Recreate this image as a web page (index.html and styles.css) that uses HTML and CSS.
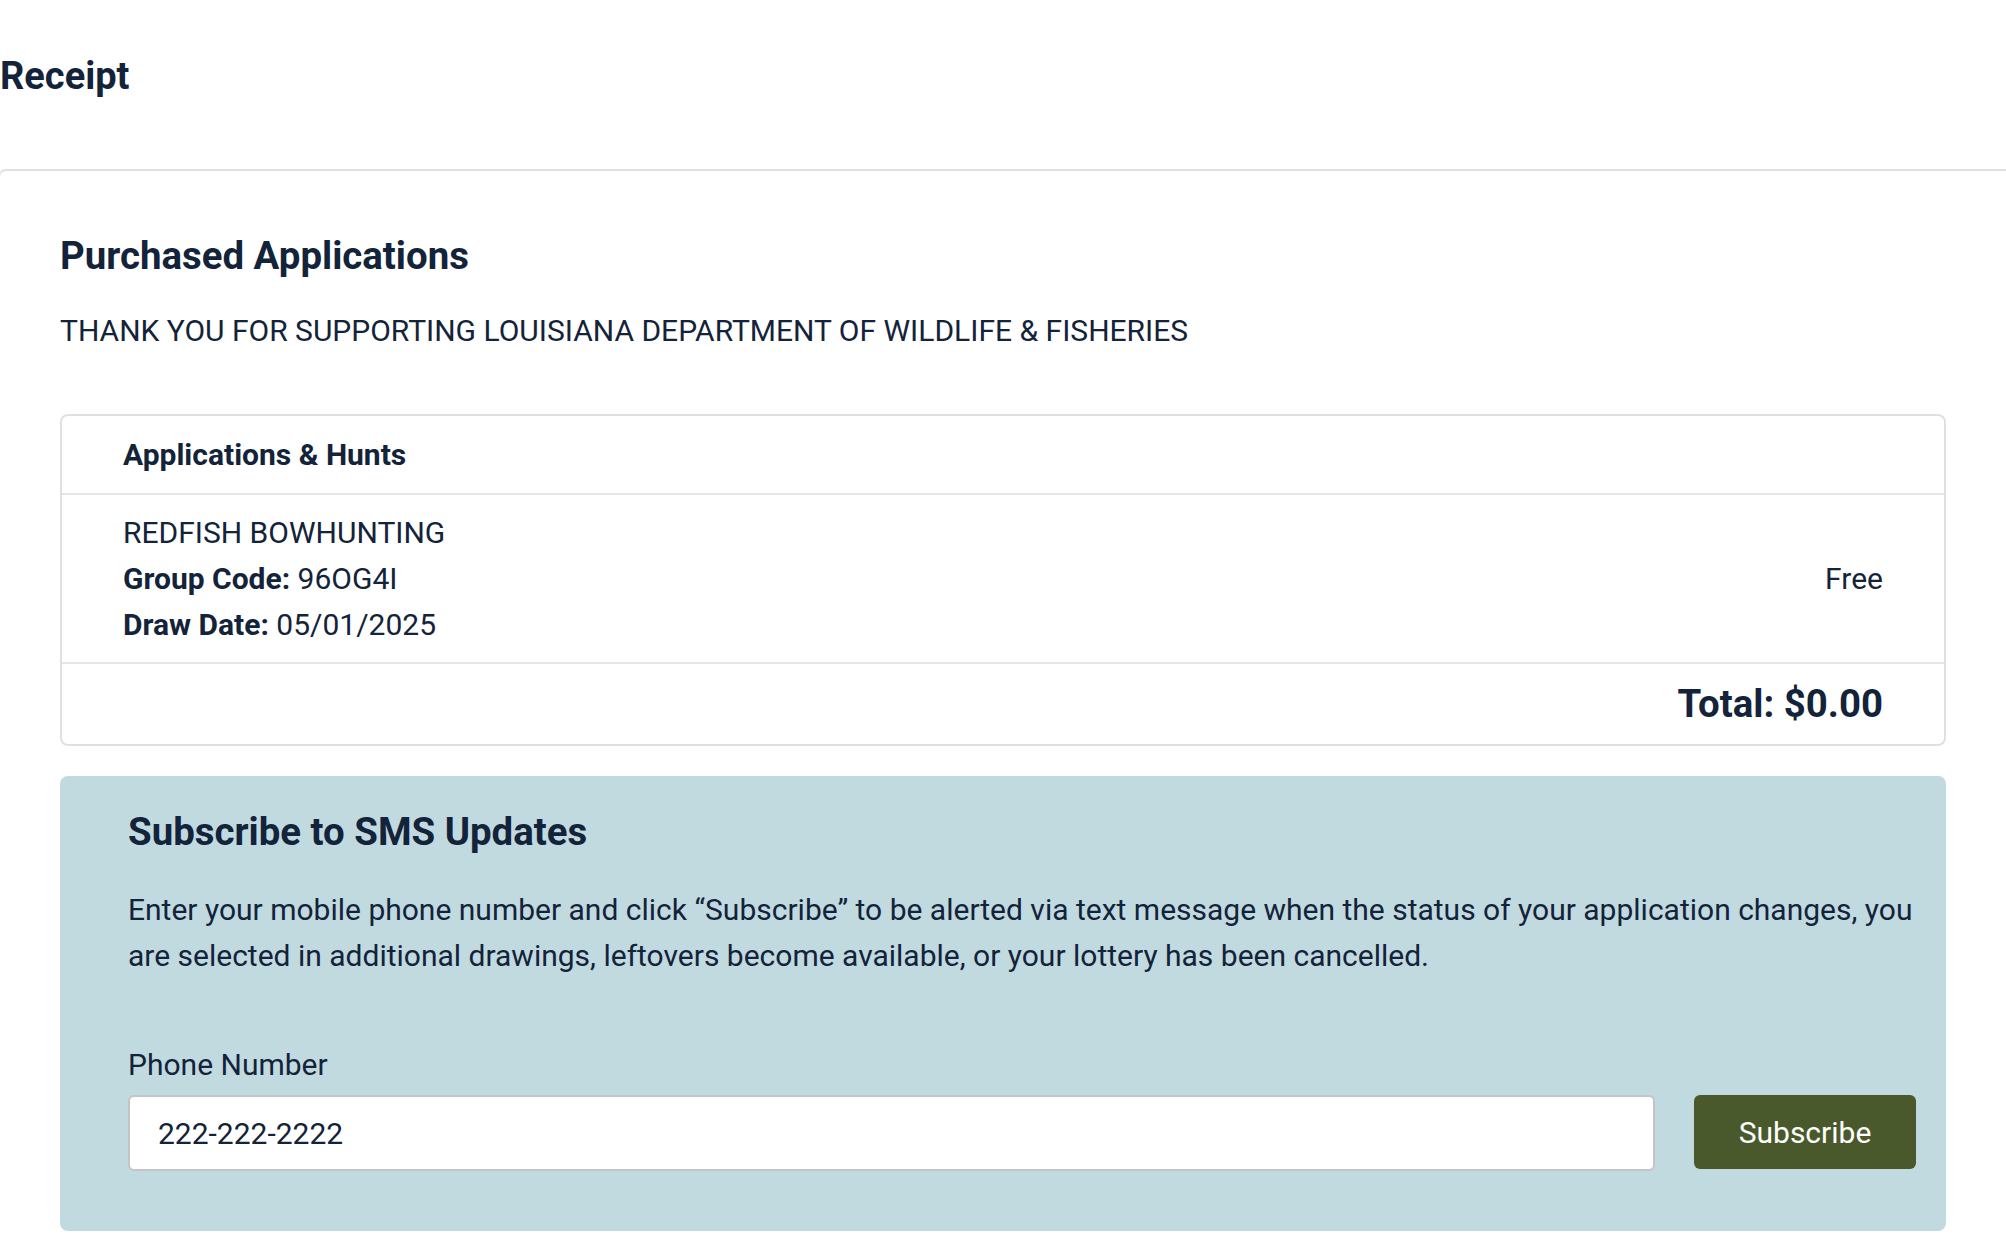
FILE: index.html
```html
<!DOCTYPE html>
<html lang="en">
<head>
    <meta charset="UTF-8">
    <meta name="viewport" content="width=device-width, initial-scale=1.0">
    <title>Receipt</title>
    <link rel="stylesheet" href="styles.css">
</head>
<body>
    <header class="page-header">
        <h1>Receipt</h1>
    </header>

    <main class="receipt-card">
        <h2 class="section-title">Purchased Applications</h2>
        <p class="thanks">THANK YOU FOR SUPPORTING LOUISIANA DEPARTMENT OF WILDLIFE &amp; FISHERIES</p>

        <div class="order-box">
            <div class="order-head">Applications &amp; Hunts</div>
            <div class="order-item">
                <div class="item-info">
                    <div>REDFISH BOWHUNTING</div>
                    <div><strong>Group Code:</strong> 96OG4I</div>
                    <div><strong>Draw Date:</strong> 05/01/2025</div>
                </div>
                <div class="item-price">Free</div>
            </div>
            <div class="order-total">Total: $0.00</div>
        </div>

        <section class="sms-panel">
            <h3>Subscribe to SMS Updates</h3>
            <p>Enter your mobile phone number and click &ldquo;Subscribe&rdquo; to be alerted via text message when the status of your application changes, you are selected in additional drawings, leftovers become available, or your lottery has been cancelled.</p>
            <label for="phone">Phone Number</label>
            <div class="sms-form">
                <input type="text" id="phone" value="222-222-2222">
                <button type="button">Subscribe</button>
            </div>
        </section>
    </main>
</body>
</html>
```

FILE: styles.css
```css
* {
    box-sizing: border-box;
    margin: 0;
    padding: 0;
}

body {
    font-family: Roboto, "Liberation Sans", sans-serif;
    font-size: 30px;
    line-height: 46px;
    color: #13233a;
    background-color: #fff;
    overflow-x: hidden;
}

.page-header {
    padding: 52px 0 69px;
}

.page-header h1 {
    font-size: 38px;
    line-height: 48px;
    font-weight: 700;
}

.receipt-card {
    margin-left: -2px;
    border-top: 2px solid #e0e0e0;
    border-left: 2px solid #e6e6e6;
    border-top-left-radius: 8px;
    padding: 0 60px 40px 60px;
}

.section-title {
    font-size: 38.4px;
    font-weight: 700;
    margin-top: 62px;
}

.thanks {
    margin-top: 29px;
}

.order-box {
    margin-top: 60px;
    border: 2px solid #e0e0e0;
    border-radius: 8px;
}

.order-head {
    font-weight: 700;
    padding: 16px 61px 15px;
    border-bottom: 2px solid #e6e6e6;
}

.order-item {
    display: flex;
    justify-content: space-between;
    align-items: center;
    padding: 15px 61px 14px;
    border-bottom: 2px solid #e6e6e6;
}

.order-total {
    text-align: right;
    font-size: 38.4px;
    font-weight: 700;
    padding: 17px 61px 17px;
}

/* SMS box */
.sms-panel {
    margin-top: 30px;
    background-color: #c1dae0;
    border-radius: 8px;
    padding: 33px 30px 60px 68px;
}

.sms-panel h3 {
    font-size: 38.4px;
    font-weight: 700;
}

.sms-panel p {
    margin-top: 32px;
}

.sms-panel label {
    display: block;
    margin-top: 63px;
}

.sms-form {
    display: flex;
    align-items: flex-start;
    gap: 39px;
    margin-top: 7px;
}

.sms-form input {
    flex: 1;
    height: 76px;
    padding: 0 28px;
    font-family: inherit;
    font-size: 30px;
    color: #13233a;
    background-color: #fff;
    border: 2px solid #c4c4c4;
    border-radius: 6px;
}

.sms-form button {
    width: 222px;
    height: 74px;
    font-family: inherit;
    font-size: 30px;
    color: #fff;
    background-color: #4a592b;
    border: none;
    border-radius: 6px;
    cursor: pointer;
}
```
